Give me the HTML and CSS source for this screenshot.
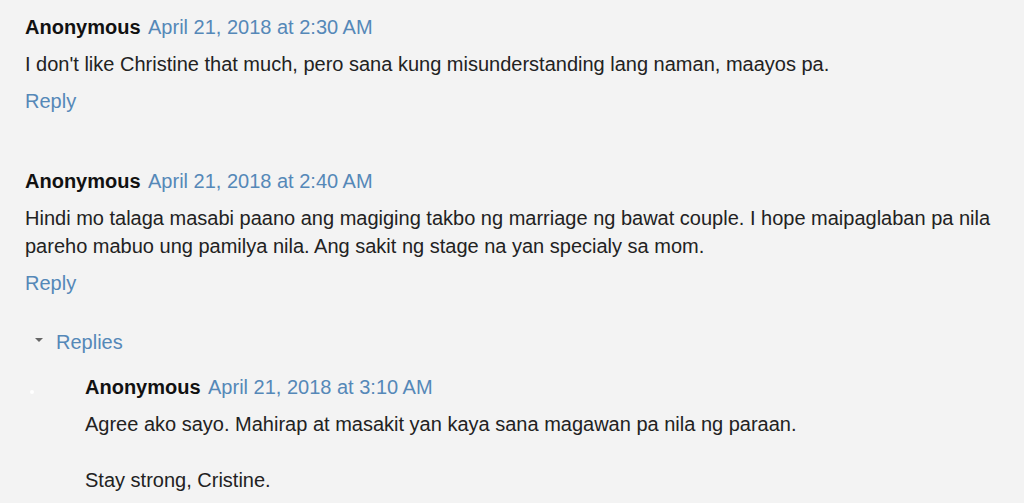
FILE: index.html
```html
<!DOCTYPE html>
<html>

<head>
    <title>Comments</title>
    <link rel="stylesheet" href="styles.css">
</head>

<body>
    <div class="comments">
        <div class="comment">
            <div class="comment-header">
                <span class="user">Anonymous</span>
                <a class="datetime" href="#">April 21, 2018 at 2:30 AM</a>
            </div>
            <p class="comment-content">I don't like Christine that much, pero sana kung misunderstanding lang naman, maayos pa.</p>
            <div class="comment-actions"><a href="#">Reply</a></div>
        </div>

        <div class="comment">
            <div class="comment-header">
                <span class="user">Anonymous</span>
                <a class="datetime" href="#">April 21, 2018 at 2:40 AM</a>
            </div>
            <p class="comment-content">Hindi mo talaga masabi paano ang magiging takbo ng marriage ng bawat couple. I hope maipaglaban pa nila pareho mabuo ung pamilya nila. Ang sakit ng stage na yan specialy sa mom.</p>
            <div class="comment-actions"><a href="#">Reply</a></div>

            <div class="thread">
                <div class="thread-toggle"><span class="arrow"></span><a href="#">Replies</a></div>
                <div class="replies">
                    <div class="reply">
                        <span class="avatar"></span>
                        <div class="reply-body">
                            <div class="comment-header">
                                <span class="user">Anonymous</span>
                                <a class="datetime" href="#">April 21, 2018 at 3:10 AM</a>
                            </div>
                            <p class="comment-content">Agree ako sayo. Mahirap at masakit yan kaya sana magawan pa nila ng paraan.<br><br>Stay strong, Cristine.</p>
                        </div>
                    </div>
                </div>
            </div>
        </div>
    </div>
</body>

</html>
```

FILE: styles.css
```css
body {
    font-family: "Liberation Sans", Arial, sans-serif;
    font-size: 20px;
    margin: 0;
    padding: 0;
    background-color: #f3f3f3;
    color: #222;
}

a {
    color: #5588b8;
    text-decoration: none;
}

.comments {
    padding: 13px 0 0 25px;
}

.comment {
    margin-bottom: 52px;
}

.comment-header {
    line-height: 28px;
}

.user {
    font-weight: bold;
    color: #111;
    margin-right: 3px;
}

.comment-content {
    margin: 9px 0 0;
    line-height: 28px;
}

.comment-actions {
    margin-top: 9px;
    line-height: 28px;
}

.thread {
    margin-top: 31px;
}

.thread-toggle {
    display: flex;
    align-items: center;
    line-height: 28px;
}

.arrow {
    width: 0;
    height: 0;
    border-left: 4px solid transparent;
    border-right: 4px solid transparent;
    border-top: 4px solid #666;
    margin: 0 13px 4px 10px;
}

.replies {
    margin-top: 17px;
}

.reply {
    display: flex;
}

.avatar {
    width: 4px;
    height: 4px;
    margin: 17px 0 0 5px;
    background-color: #fff;
    border-radius: 50%;
}

.reply-body {
    margin-left: 51px;
}

.reply .comment-content {
    margin-top: 9px;
}
```
